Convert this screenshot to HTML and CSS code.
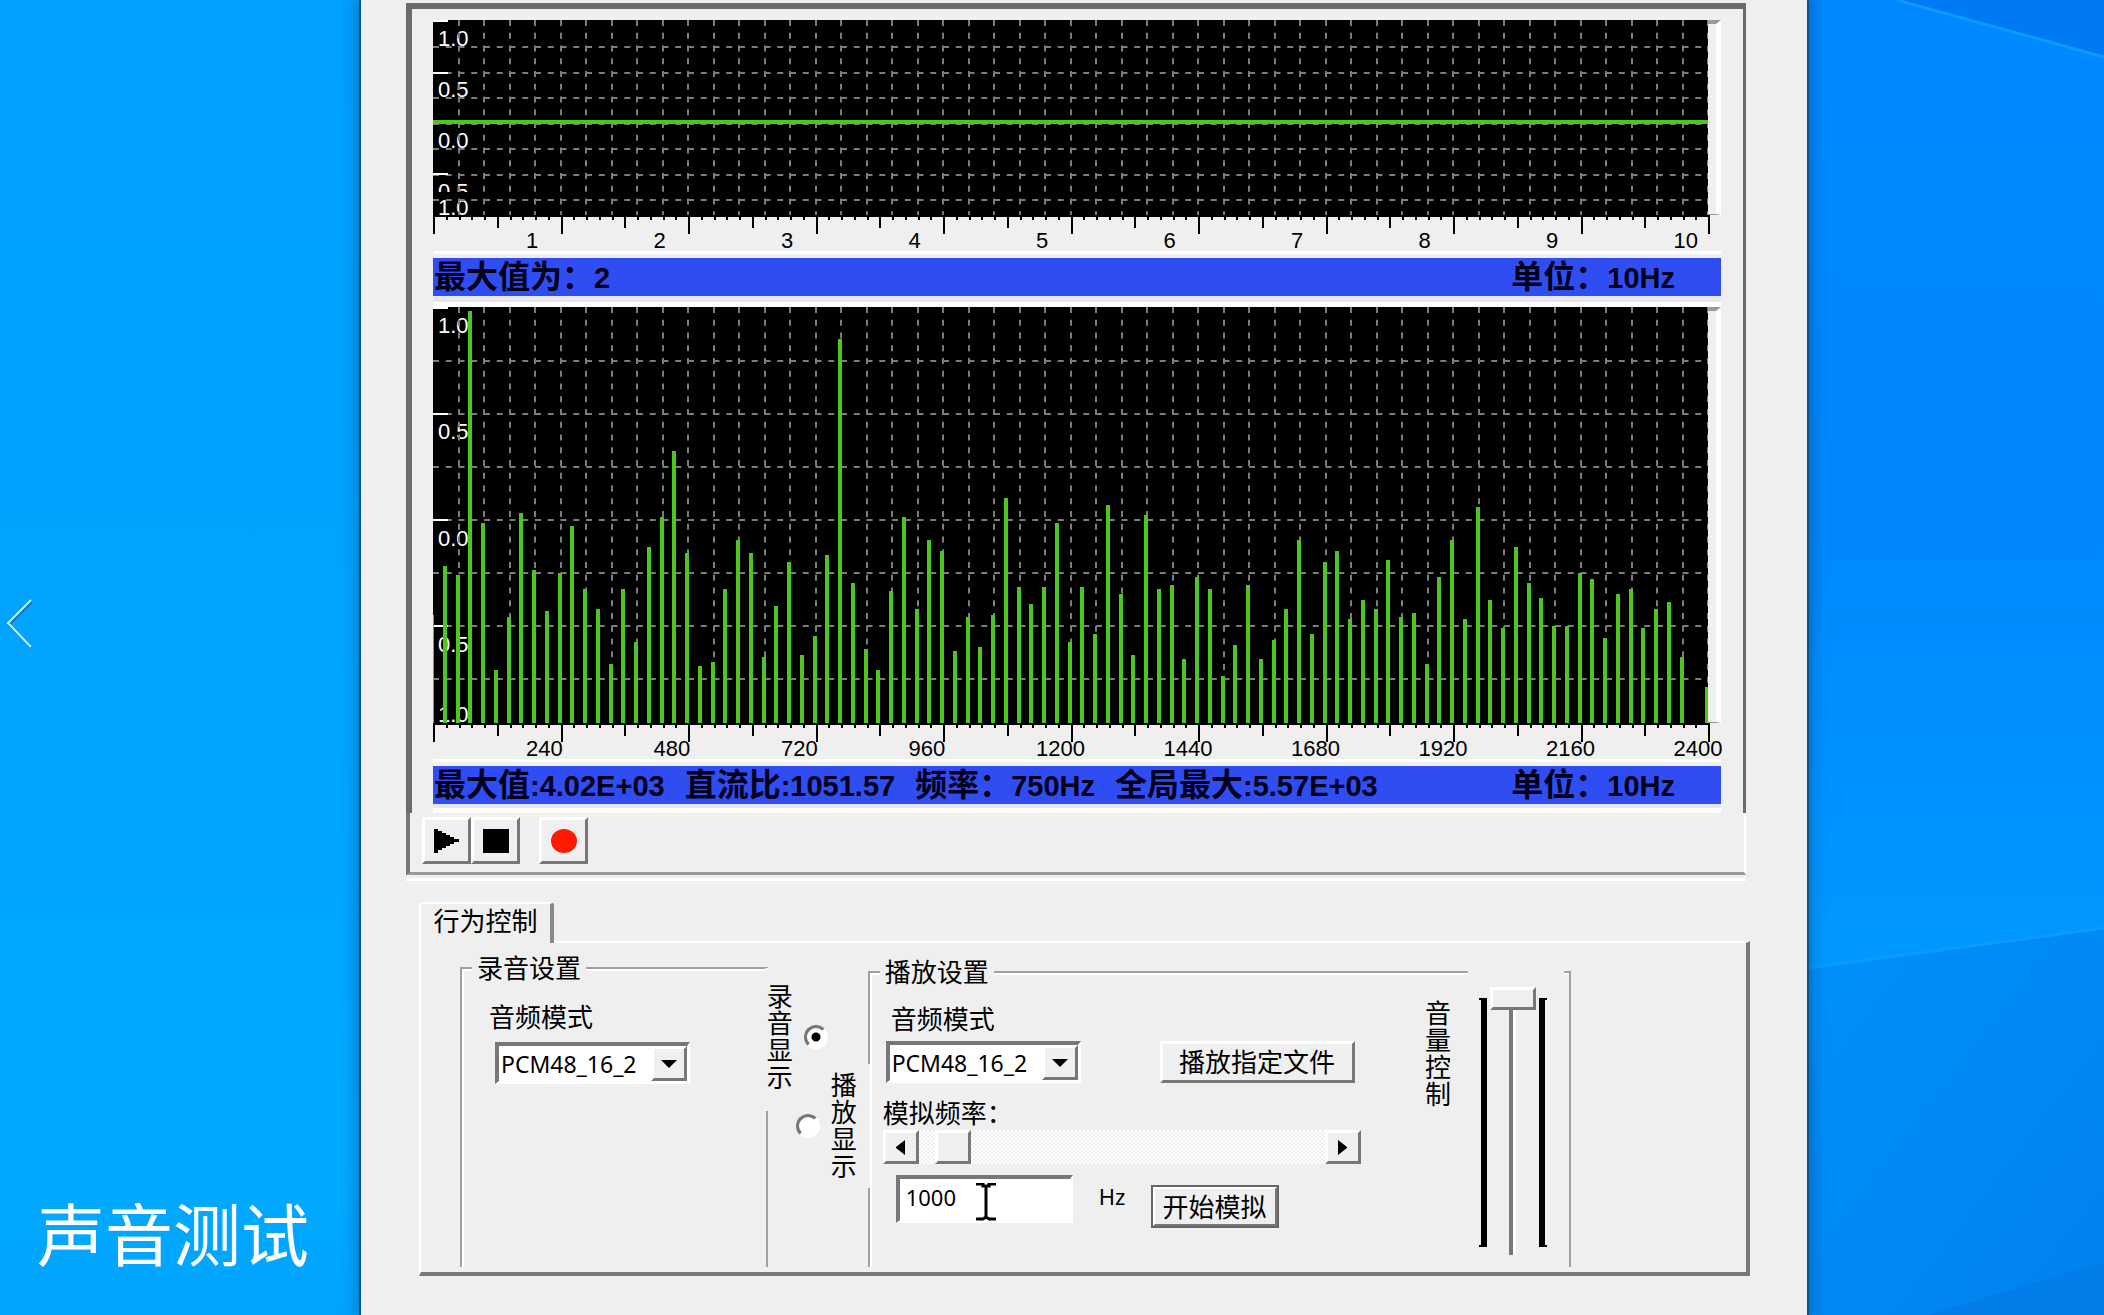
FILE: index.html
```html
<!DOCTYPE html>
<html lang="zh-CN">
<head>
<meta charset="utf-8">
<meta name="viewport" content="width=device-width, initial-scale=1">
<title>声音测试</title>
<link rel="stylesheet" href="styles.css">
</head>
<body>
<div class="desktop">
  <aside class="side">
    <button class="prev" type="button" aria-label="上一个">
      <svg width="28" height="52" viewBox="0 0 28 52" fill="none"><path d="M26 4L3 27L26 50" stroke="#1876b8" stroke-width="2"/><path d="M25 2L2 25L25 49" stroke="#cfeaff" stroke-width="2"/></svg>
    </button>
    <h1 class="caption">声音测试</h1>
  </aside>

  <main class="window">
    <section class="scope">
      <div class="plot-row plot-row-wave">
        <div class="plot">
          <ul class="levels levels-wave"><li>1.0</li><li>0.5</li><li>0.0</li><li>0.5</li><li>1.0</li></ul>
          <svg class="trace" id="wave" viewBox="0 0 1275 195" preserveAspectRatio="none"></svg>
        </div>
        <div class="bezel"></div>
      </div>
      <div class="axis">
        <svg class="ticks" viewBox="0 0 1290 36" preserveAspectRatio="none"></svg>
        <ol class="marks"><li>1</li><li>2</li><li>3</li><li>4</li><li>5</li><li>6</li><li>7</li><li>8</li><li>9</li><li>10</li></ol>
      </div>
      <div class="status">
        <span>最大值为：<b>2</b></span><span class="unit">单位：<b>10Hz</b></span>
      </div>
      <div class="ledge ledge-mid"></div>
      <div class="plot-row plot-row-spectrum">
        <div class="plot">
          <ul class="levels levels-spectrum"><li>1.0</li><li>0.5</li><li>0.0</li><li>0.5</li><li>1.0</li></ul>
          <svg class="trace" id="spectrum" viewBox="0 0 1275 416" preserveAspectRatio="none"></svg>
        </div>
        <div class="bezel"></div>
      </div>
      <div class="axis">
        <svg class="ticks" viewBox="0 0 1290 36" preserveAspectRatio="none"></svg>
        <ol class="marks"><li>240</li><li>480</li><li>720</li><li>960</li><li>1200</li><li>1440</li><li>1680</li><li>1920</li><li>2160</li><li>2400</li></ol>
      </div>
      <div class="status">
        <span>最大值<b>:4.02E+03</b></span><span>直流比<b>:1051.57</b></span><span>频率：<b>750Hz</b></span><span>全局最大<b>:5.57E+03</b></span><span class="unit">单位：<b>10Hz</b></span>
      </div>
      <div class="ledge"></div>
    </section>
    <div class="toolbar">
      <button class="btn tool" type="button" aria-label="播放"><svg width="26" height="24" viewBox="0 0 26 24"><path d="M0 0H4V2H8V4H12V6H16V8H20V10H25V13H20V15H16V17H12V19H8V21H4V24H0Z"/></svg></button>
      <button class="btn tool" type="button" aria-label="停止"><svg width="26" height="24" viewBox="0 0 26 24"><path d="M0 0H26V24H0Z"/></svg></button>
      <button class="btn tool tool-record" type="button" aria-label="录音"><svg width="26" height="24" viewBox="0 0 26 24"><ellipse cx="13" cy="12" rx="13" ry="12" fill="#ff1a00"/></svg></button>
    </div>

    <div class="tabs">
      <button class="tab" type="button" role="tab" aria-selected="true">行为控制</button>
      <div class="page" role="tabpanel">
        <fieldset class="group group-record">
          <legend>录音设置</legend>
          <div class="record-mode">
            <label for="rec-mode">音频模式</label>
            <div class="combo"><select id="rec-mode"><option>PCM48_16_2</option></select><span class="combo-arrow"></span></div>
          </div>
        </fieldset>

        <div class="show">
          <label class="vlabel show-record"><span>录音显示</span><input type="radio" name="show" checked></label>
          <label class="vlabel show-play"><input type="radio" name="show"><span>播放显示</span></label>
        </div>

        <fieldset class="group group-play">
          <legend>播放设置</legend>
          <div class="play">
            <div class="play-controls">
              <label class="play-label" for="play-mode">音频模式</label>
              <div class="mode-row">
                <div class="combo"><select id="play-mode"><option>PCM48_16_2</option></select><span class="combo-arrow"></span></div>
                <button class="btn btn-file" type="button">播放指定文件</button>
              </div>
              <label class="freq-label" for="freq">模拟频率：</label>
              <div class="scroll">
                <button class="btn scroll-btn" type="button" aria-label="减小"><svg width="9" height="15" viewBox="0 0 9 15"><path d="M9 0V15L0 8V7Z"/></svg></button>
                <input class="scroll-range" id="freq" type="range" min="0" max="23000" value="1000">
                <button class="btn scroll-btn" type="button" aria-label="增大"><svg width="9" height="15" viewBox="0 0 9 15"><path d="M0 0V15L9 8V7Z"/></svg></button>
              </div>
              <div class="hz-row">
                <div class="hz-box">
                  <input class="hz-input" id="hz" type="text" value="1000">
                  <svg class="ibeam" width="20" height="38" viewBox="0 0 20 38"><path d="M0 1H7V3H9L10 4L11 3H13V1H20M10 3V35M0 36H7L10 34L13 36H20" fill="none" stroke="#000" stroke-width="3"/></svg>
                </div>
                <label class="hz" for="hz">Hz</label>
                <button class="btn btn-start" type="button">开始模拟</button>
              </div>
            </div>
            <label class="volume-label" for="volume">音量控制</label>
            <div class="volume">
              <span class="rail rail-left"></span>
              <input class="volume-range" id="volume" type="range" min="0" max="100" value="100">
              <span class="rail rail-right"></span>
            </div>
          </div>
        </fieldset>
      </div>
    </div>
  </main>

  <div class="wallpaper">
    <svg viewBox="0 0 297 1315" preserveAspectRatio="none">
      <defs>
        <linearGradient id="beam" x1="0" y1="0" x2="0" y2="1"><stop offset="0" stop-color="#0088ff"/><stop offset=".55" stop-color="#0088fb"/><stop offset="1" stop-color="#0099ff"/></linearGradient>
        <linearGradient id="low" x1="0" y1="0" x2="1" y2="1"><stop offset="0" stop-color="#0090fa"/><stop offset="1" stop-color="#0082ee"/></linearGradient>
      </defs>
      <path d="M0 0H297V930L0 968Z" fill="url(#beam)"/>
      <path d="M90 0H297V57Z" fill="#007af2"/>
      <path d="M0 968L297 928V1315H0Z" fill="url(#low)"/>
      <path d="M120 1315L297 1262V1315Z" fill="#007de8"/>
      <path d="M90 0L297 57M0 968L297 928" fill="none" stroke="#0a9bff" stroke-width="3"/>
    </svg>
  </div>
</div>
<script src="charts.js"></script>
</body>
</html>
```
FILE: styles.css
```css
* { box-sizing: border-box; }

body {
  margin: 0;
  background: #00a2ff;
  color: #000;
  font: 26px/26px "Noto Sans", "Noto Sans CJK SC", sans-serif;
}

button, input, select { font: inherit; color: inherit; margin: 0; }

ul, ol { margin: 0; padding: 0; list-style: none; }

.desktop {
  display: grid;
  grid-template-columns: 361fr 1446fr 297fr;
  min-height: 100vh;
}

/* Left strip */
.side {
  display: flex;
  flex-direction: column;
  justify-content: space-between;
  padding: 598px 0 43px;
  background: linear-gradient(#00a0ff, #00a9ff 90%, #00a4ff);
}

.prev {
  align-self: flex-start;
  margin-left: 6px;
  padding: 0;
  border: 0;
  background: none;
}

.prev svg { display: block; }

.caption {
  margin: 0 0 0 37px;
  color: #fff;
  font: 400 68px/80px "Noto Sans CJK SC", sans-serif;
  white-space: nowrap;
}

/* Right strip */
.wallpaper { position: relative; background: #0088ff; }

.wallpaper svg { position: absolute; inset: 0; width: 100%; height: 100%; }

/* Application window */
.window {
  position: relative;
  z-index: 1;
  min-width: 0;
  padding: 3px 61px 36px 45px;
  background: #efefef;
  box-shadow: 0 0 0 2px #0b5487, 0 0 14px 4px rgba(0, 50, 100, .4);
}

.scope {
  padding: 11px 22px 0 21px;
  border: solid #6b6b6b;
  border-width: 6px 3px 0 6px;
}

.plot-row { display: flex; }
.plot-row-wave { height: 195px; }
.plot-row-spectrum { height: 416px; }

.plot {
  display: grid;
  flex: 1;
  min-width: 0;
  background: #000;
}

.levels, .trace { grid-area: 1 / 1; }

.trace { width: 100%; height: 100%; min-height: 0; }

.levels {
  display: grid;
  padding-left: 5px;
  color: #fff;
  font: 22px/38px "Liberation Sans", Arial, sans-serif;
}

.levels li { overflow: hidden; }
.levels-wave { grid-template-rows: 51px 51px 51px 19px 23px; }
.levels-wave li:last-child { line-height: 32px; }
.levels-spectrum { grid-template-rows: 106px 107px 106px 73px 24px; }
.levels-spectrum li:last-child { line-height: 32px; }

.bezel {
  flex: none;
  width: 13px;
  border-top: 4px solid #999;
  border-right: 5px solid #fff;
  border-bottom: 1px solid #999;
}

.axis {
  display: grid;
  height: 39px;
  margin-bottom: 4px;
  border-bottom: 3px solid #fff;
}

.ticks, .marks { grid-area: 1 / 1; min-width: 0; }

.ticks { width: calc(100% + 2px); height: 36px; }

.marks {
  display: grid;
  grid-template-columns: repeat(10, 1fr);
  align-self: end;
  width: calc(100% + 80px);
  padding-left: 93px;
  font: 22px/20px "Liberation Sans", Arial, sans-serif;
}

.marks li { white-space: nowrap; }

.status {
  display: flex;
  gap: 20px;
  height: 38px;
  padding: 0 46px 0 1px;
  background: #2f4df0;
  color: #000018;
  font: 700 32px/32px "Noto Sans CJK SC", sans-serif;
  white-space: nowrap;
}

.status b { font: 700 29px/32px "Liberation Sans", Arial, sans-serif; }

.unit { margin-left: auto; }

.ledge { height: 9px; border-bottom: 5px solid #fff; background: #e6e6ee; }

.ledge-mid { height: 11px; }

/* Bevelled buttons */
.btn {
  display: flex;
  align-items: center;
  justify-content: center;
  padding: 0;
  border: 3px solid;
  border-color: #fff #777 #777 #fff;
  background: #efefef;
  white-space: nowrap;
}

.toolbar {
  display: flex;
  height: 62px;
  padding: 4px 0 0 12px;
  border: solid;
  border-width: 0 2px 3px 4px;
  border-color: #fff #fff #999 #777;
  box-shadow: 0 3px #efefef, 0 6px #fff;
}

.tool { width: 49px; height: 47px; }
.tool svg { display: block; }
.tool-record { margin-left: 19px; }

/* Tab control */
.tabs { margin: 27px -4px 0 13px; }

.tab {
  position: relative;
  display: block;
  width: 135px;
  height: 41px;
  margin-bottom: -2px;
  padding: 0 0 5px;
  border: solid;
  border-width: 2px 4px 0 2px;
  border-color: #fff #888 #fff #fff;
  border-radius: 5px 4px 0 0;
  background: #efefef;
}

.page {
  display: grid;
  grid-template-columns: 308fr 100fr 704fr;
  height: 335px;
  padding: 12px 175px 5px 39px;
  border: solid;
  border-width: 2px 4px 4px 2px;
  border-color: #fff #777 #777 #fff;
}

.group {
  min-width: 0;
  margin: 0;
  padding: 0;
  border: 2px solid #a0a0a0;
  border-bottom: 0;
  box-shadow: inset 2px 2px #fff;
}

.group legend { margin-left: 10px; padding: 0 5px; background: #efefef; }

.group-play { margin-top: 4px; }

.record-mode {
  display: flex;
  flex-direction: column;
  gap: 12px;
  padding: 23px 0 0 33px;
}

.record-mode label { margin-left: -6px; }

.combo {
  position: relative;
  width: 195px;
  height: 42px;
  border: solid;
  border-width: 4px 3px 3px 4px;
  border-color: #777 #fff #fff #777;
  background: #fff;
}

.combo select {
  width: 100%;
  height: 100%;
  padding: 0 0 0 2px;
  border: 0;
  background: none;
  appearance: none;
  font: 23px/30px "Noto Sans", sans-serif;
}

.combo-arrow {
  position: absolute;
  top: 0;
  right: 0;
  width: 36px;
  height: 35px;
  border: 3px solid;
  border-color: #fff #777 #777 #fff;
  background: #efefef;
  pointer-events: none;
}

.combo-arrow::after {
  content: "";
  display: block;
  margin: 11px auto 0 7px;
  width: 0;
  border: solid transparent;
  border-width: 8px 8px 0;
  border-top-color: #000;
}

/* Display choice, overlapping the frames on both sides */
.show {
  position: relative;
  z-index: 1;
  display: flex;
  flex-direction: column;
  padding-top: 13px;
}

.vlabel { display: flex; align-items: center; }

.vlabel span, .volume-label {
  flex: none;
  width: 26px;
  line-height: 27px;
  white-space: normal;
  word-break: break-all;
}

.show-record {
  gap: 11px;
  width: 64px;
  height: 143px;
  margin-left: -3px;
  padding: 0 0 5px 2px;
  background: #efefef;
}

.show-record span { align-self: flex-start; margin-top: 15px; }

.show-play {
  align-self: flex-end;
  gap: 11px;
  width: 74px;
  height: 124px;
  margin: -47px -2px 0 0;
  background: #efefef;
}

.vlabel input {
  flex: none;
  align-self: center;
  width: 24px;
  height: 24px;
  border: 3px solid;
  border-color: #777 #fff #fff #777;
  border-radius: 50%;
  background: #fff;
  appearance: none;
}

.vlabel input:checked { background: radial-gradient(circle, #000 4px, #fff 5px); }

/* Playback group */
.play { display: flex; align-items: flex-start; }

.play-controls { flex: 1; padding: 21px 0 0 13px; }

.play-label, .freq-label { display: block; }
.play-label { margin-left: 8px; }

.mode-row {
  display: flex;
  justify-content: space-between;
  width: 469px;
  margin: 9px 0 17px 3px;
}

.btn-file { width: 195px; height: 42px; }

.scroll {
  display: flex;
  width: 478px;
  height: 34px;
  margin: 4px 0 11px;
}

.scroll-btn { flex: none; width: 36px; }

.scroll-range {
  flex: 1;
  min-width: 0;
  height: 34px;
  background: repeating-conic-gradient(#efefef 0 25%, #fff 0 50%) 0 0 / 4px 4px;
  appearance: none;
}

.scroll-range::-webkit-slider-thumb {
  width: 36px;
  height: 34px;
  border: 3px solid;
  border-color: #fff #777 #777 #fff;
  background: #efefef;
  appearance: none;
}

.hz-row { display: flex; align-items: flex-start; margin-left: 13px; }

.hz-box { position: relative; }

.hz-input {
  display: block;
  width: 177px;
  height: 48px;
  padding: 0 6px 6px;
  border: solid;
  border-width: 4px 3px 3px 4px;
  border-color: #777 #fff #fff #777;
  background: #fff;
  font-size: 22px;
}

.ibeam { position: absolute; left: 80px; top: 8px; }

.hz { width: 26px; margin: 8px 26px 0 26px; font-size: 22px; }

.btn-start {
  width: 128px;
  height: 43px;
  margin-top: 10px;
  outline: 2px solid #666;
  outline-offset: -2px;
  border-width: 4px;
}

.volume-label { margin: 15px 17px 0 0; }

.volume {
  display: flex;
  gap: 3px;
  width: 96px;
  height: 298px;
  margin: -22px 5px -10px 0;
  padding: 24px 0 0 11px;
  background: #efefef;
}

.rail {
  width: 8px;
  height: 249px;
  margin-top: 11px;
  border: solid #000;
  background: #000 content-box;
}

.rail-left { border-width: 2px 0; padding-left: 2px; }
.rail-right { border-width: 2px 0; padding-right: 2px; }

.volume-range {
  width: 46px;
  height: 268px;
  margin: 0;
  background: linear-gradient(90deg, #777 4px, #fff 4px) 19px 0 / 7px 100% no-repeat;
  appearance: none;
  writing-mode: vertical-lr;
  direction: rtl;
}

.volume-range::-webkit-slider-thumb {
  width: 46px;
  height: 23px;
  border: 3px solid;
  border-color: #fff #777 #777 #fff;
  background: #efefef;
  appearance: none;
}
```
FILE: charts.js
```js
const STEP = 12.75;
const GRID = '#7c7c7c';
const TRACE = '#4cc71e';

// Height of each spectrum line, lowest frequency first.
const spectrum = [
  108, 157, 148, 412, 200, 53, 106, 210, 153, 112,
  150, 197, 134, 114, 59, 134, 81, 176, 206, 272,
  170, 57, 61, 134, 183, 170, 66, 117, 161, 68,
  87, 168, 384, 140, 74, 53, 132, 206, 114, 183,
  172, 72, 106, 76, 108, 225, 136, 119, 136, 200,
  81, 136, 89, 218, 129, 68, 208, 134, 138, 64,
  146, 134, 47, 78, 138, 64, 83, 114, 183, 89,
  161, 172, 104, 123, 114, 163, 106, 110, 59, 146,
  183, 104, 216, 123, 95, 176, 140, 125, 97, 97,
  150, 144, 85, 129, 134, 95, 114, 121, 66, 0, 36
];

function path(d, color, width, dash) {
  return `<path d="${d}" fill="none" stroke="${color}" stroke-width="${width}"` +
    (dash ? ` stroke-dasharray="${dash}"` : '') + '/>';
}

function grid(height, first, pitch) {
  let rows = '';
  let columns = '';
  for (let y = first; y < height - 5; y += pitch) rows += `M0 ${Math.round(y)}H1275`;
  for (let i = 1; i <= 50; i++) columns += `M${Math.round(i * 25.5)} 0V${height}`;
  return path(rows, GRID, 2, '6 6.75') + path(columns, GRID, 2, '6 6.75');
}

function levels(ys) {
  return path(ys.map(y => `M0 ${y}H15`).join(''), '#fff', 2);
}

document.getElementById('wave').innerHTML =
  grid(195, 27, 25.5) + levels([1, 53, 154]) + path('M0 102H1275', TRACE, 4);

document.getElementById('spectrum').innerHTML =
  grid(416, 54, 53) + levels([1, 107, 213, 319]) +
  path(spectrum.map((h, i) => `M${Math.round(i * STEP) - 1} 416v-${h}`).join(''), TRACE, 4);

let ticks = 'M0 1H1275';
for (let i = 0; i <= 100; i++) {
  const length = i % 10 === 0 ? 19 : i % 5 === 0 ? 13 : 5;
  ticks += `M${Math.round(i * STEP) + 1} 0V${length}`;
}
document.querySelectorAll('.ticks').forEach(svg => {
  svg.innerHTML = path(ticks, '#000', 2);
});
```
